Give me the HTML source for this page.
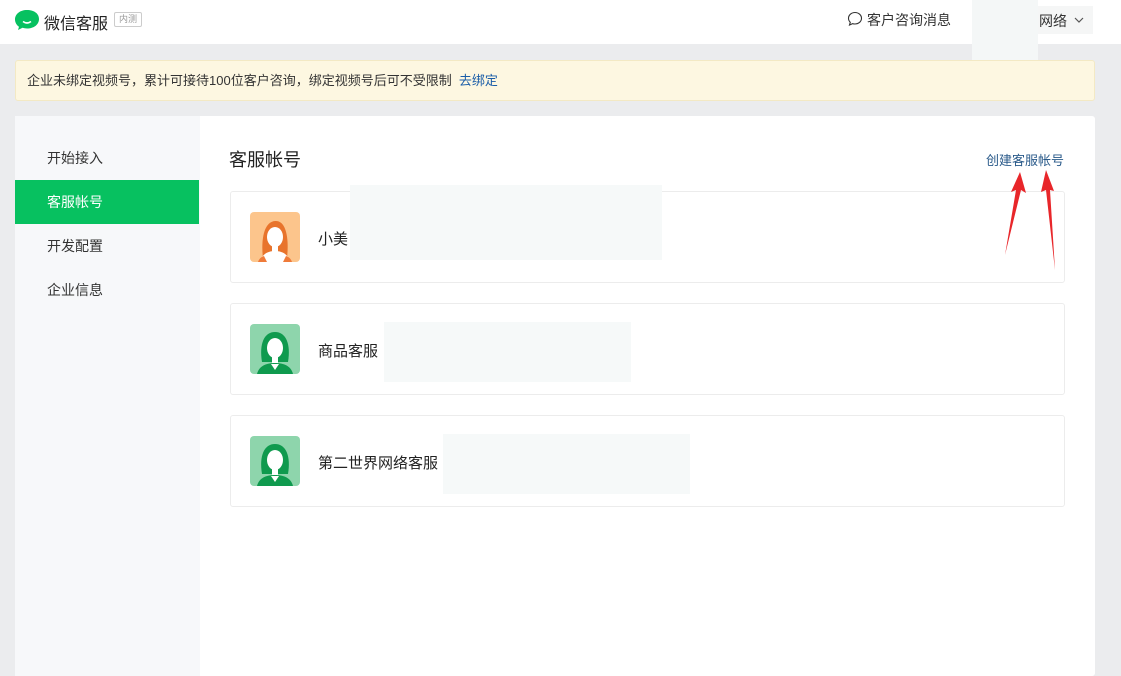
<!DOCTYPE html>
<html><head><meta charset="utf-8"><style>
*{margin:0;padding:0;box-sizing:border-box}
body{width:1121px;height:668px;overflow:hidden;background:#ebecee;font-family:"Liberation Sans","Noto Sans CJK SC",sans-serif;position:relative;color:#222}
.abs{position:absolute}
.top{left:0;top:0;width:1121px;height:44px;background:#fff}
.banner{left:15px;top:60px;width:1080px;height:41px;background:#fdf7e1;border:1px solid #f3e9c4;border-radius:3px;font-size:13px;line-height:39px;padding-left:11px;color:#333}
.main{left:15px;top:116px;width:1080px;height:560px;background:#fff;border-radius:3px}
.side{left:15px;top:116px;width:185px;height:560px;background:#f7f8fa}
.nav{left:15px;width:184px;height:44px;line-height:44px;padding-left:32px;font-size:14px;color:#333}
.card{left:230px;width:835px;height:92px;border:1px solid #ececec;border-radius:3px;background:#fff}
.ph{background:#f6f9f9}
.name{font-size:15px;color:#222}
</style></head><body>
<div class="abs top"></div>
<svg class="abs" style="left:14px;top:9px" width="26" height="22" viewBox="0 0 26 22"><path d="M13 1C6 1 1 5 1 10.5c0 3 1.6 5.6 4 7.3L4 21l4.5-2.2c1.4.4 2.9.7 4.5.7 7 0 12-4 12-9.5S20 1 13 1z" fill="#07c160"/><path d="M9 12.5q4 3 8 0" stroke="#fff" stroke-width="1.6" fill="none"/></svg>
<div class="abs" style="left:44px;top:10px;font-size:16px;color:#222">微信客服</div>
<div class="abs" style="left:114px;top:12px;width:28px;height:15px;border:1px solid #ccc;border-radius:2px;font-size:9px;color:#999;text-align:center;line-height:13px">内测</div>
<svg class="abs" style="left:847px;top:11px" width="16" height="16" viewBox="0 0 16 16"><path d="M8 1.5c3.6 0 6.5 2.6 6.5 5.8S11.6 13 8 13c-.8 0-1.6-.1-2.3-.4L2.5 14l.8-2.7C2.1 10.2 1.5 8.8 1.5 7.3 1.5 4.1 4.4 1.5 8 1.5z" fill="none" stroke="#333" stroke-width="1.1"/></svg>
<div class="abs" style="left:867px;top:10px;font-size:14px;color:#333">客户咨询消息</div>
<div class="abs ph" style="left:972px;top:0;width:66px;height:60px;background:#f4f7f7"></div>
<div class="abs" style="left:1038px;top:6px;width:55px;height:28px;background:#f5f6f6"></div>
<div class="abs" style="left:1039px;top:11px;font-size:14px;color:#333">网络</div>
<svg class="abs" style="left:1074px;top:17px" width="10" height="7" viewBox="0 0 10 7"><path d="M1 1l4 4 4-4" stroke="#555" stroke-width="1.2" fill="none"/></svg>
<div class="abs banner">企业未绑定视频号，累计可接待100位客户咨询，绑定视频号后可不受限制 &nbsp;<span style="color:#1a5da8">去绑定</span></div>
<div class="abs main"></div>
<div class="abs side"></div>
<div class="abs nav" style="top:136px">开始接入</div>
<div class="abs nav" style="top:180px;background:#07c160;color:#fff">客服帐号</div>
<div class="abs nav" style="top:224px">开发配置</div>
<div class="abs nav" style="top:268px">企业信息</div>
<div class="abs" style="left:229px;top:146px;font-size:18px;color:#222">客服帐号</div>
<div class="abs" style="left:986px;top:150px;font-size:13px;color:#2a5a8a">创建客服帐号</div>

<div class="abs card" style="top:191px"></div>
<div class="abs ph" style="left:350px;top:185px;width:312px;height:75px"></div>
<div class="abs card" style="top:303px"></div>
<div class="abs ph" style="left:384px;top:322px;width:247px;height:60px"></div>
<div class="abs card" style="top:415px"></div>
<div class="abs ph" style="left:443px;top:434px;width:247px;height:60px"></div>

<svg class="abs" style="left:250px;top:212px" width="50" height="50" viewBox="0 0 50 50"><rect width="50" height="50" rx="4" fill="#fcc58c"/><path d="M13 46C11 30 13 10 25 9s14 20 12 37z" fill="#e8742c"/><ellipse cx="25" cy="25" rx="8" ry="10" fill="#fff"/><rect x="22" y="32" width="6" height="8" fill="#fff"/><path d="M10 50c2-8 8-11 15-11s13 3 15 11z" fill="#fff"/><path d="M8 50c1-3 3-5 6-6l3 6z M42 50c-1-3-3-5-6-6l-3 6z" fill="#ef7b3a"/></svg>
<div class="abs name" style="left:318px;top:228px">小美</div>

<svg class="abs" style="left:250px;top:324px" width="50" height="50" viewBox="0 0 50 50"><rect width="50" height="50" rx="4" fill="#8ed5ac"/><path d="M12 38C9 20 14 8 25 8s16 12 13 30z" fill="#0f9a4e"/><ellipse cx="25" cy="24" rx="8" ry="10" fill="#fff"/><rect x="22" y="30" width="6" height="10" fill="#fff"/><path d="M7 50c2-8 9-11 18-11s16 3 18 11z" fill="#0f9a4e"/><path d="M21 40h8l-4 6z" fill="#fff"/></svg>
<div class="abs name" style="left:318px;top:340px">商品客服</div>

<svg class="abs" style="left:250px;top:436px" width="50" height="50" viewBox="0 0 50 50"><rect width="50" height="50" rx="4" fill="#8ed5ac"/><path d="M12 38C9 20 14 8 25 8s16 12 13 30z" fill="#0f9a4e"/><ellipse cx="25" cy="24" rx="8" ry="10" fill="#fff"/><rect x="22" y="30" width="6" height="10" fill="#fff"/><path d="M7 50c2-8 9-11 18-11s16 3 18 11z" fill="#0f9a4e"/><path d="M21 40h8l-4 6z" fill="#fff"/></svg>
<div class="abs name" style="left:318px;top:452px">第二世界网络客服</div>

<svg class="abs" style="left:990px;top:160px" width="80" height="120" viewBox="990 160 80 120"><path d="M1005 255L1016 190 1011 192 1020 172 1026 193 1021 190z" fill="#e8262a"/><path d="M1055 270L1046 190 1041 192 1046 170 1054 191 1050 190z" fill="#e8262a"/></svg>
</body></html>
